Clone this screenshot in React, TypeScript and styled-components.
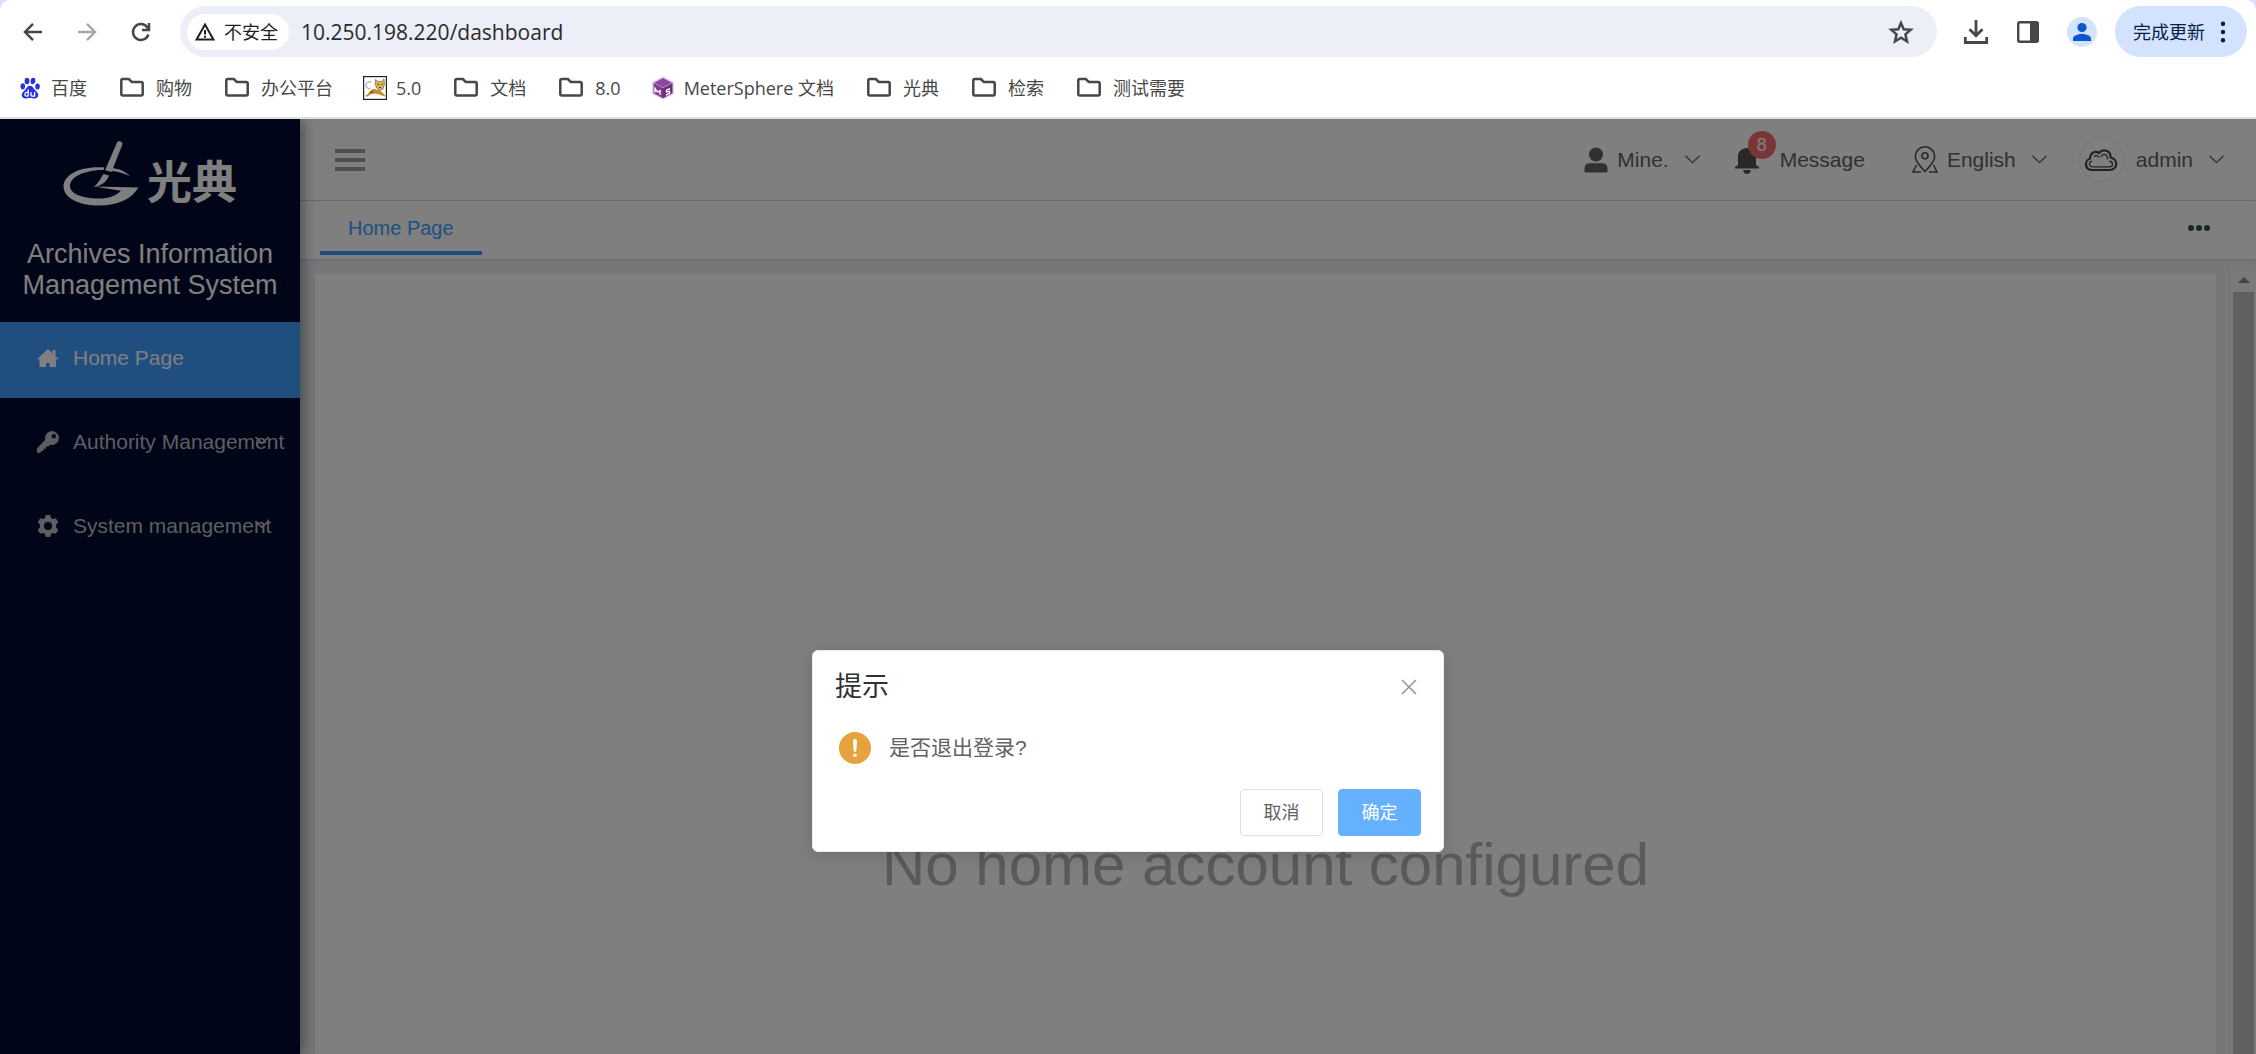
import React from "react";
import styled, { createGlobalStyle } from "styled-components";

const latin = '"Liberation Sans", Arial, "Noto Sans CJK SC", sans-serif';
const system = '"Open Sans", "Noto Sans CJK SC", sans-serif';

const GlobalStyle = createGlobalStyle`
  * { box-sizing: border-box; }
  html, body, #root { height: 100%; }
  body {
    margin: 0;
    overflow: hidden;
    font-family: ${latin};
    background: #d3e3fd;
  }
  button {
    border: 0;
    padding: 0;
    margin: 0;
    background: none;
    font: inherit;
    color: inherit;
    cursor: pointer;
  }
  a { color: inherit; text-decoration: none; }
  svg { display: block; flex: none; }
`;

const Window = styled.div`
  display: flex;
  flex-direction: column;
  height: 100vh;
`;

/* ---------- Browser chrome ---------- */

const Chrome = styled.header`
  flex: none;
  background: #fff;
  border-radius: 10px 10px 0 0;
  border-bottom: 2px solid #dedfe0;
  font-family: ${system};
  color: #474747;
`;

const Toolbar = styled.div`
  display: flex;
  align-items: center;
  padding: 6px 9px 0 20px;
`;

const NavButtons = styled.div`
  display: flex;
  gap: 28px;
  margin-right: 26px;
`;

const IconButton = styled.button<{ $faded?: boolean }>`
  display: flex;
  color: ${(p) => (p.$faded ? "#a9a9a9" : "#474747")};
`;

const Omnibox = styled.div`
  flex: 1;
  display: flex;
  align-items: center;
  height: 51px;
  padding: 0 23px 0 7px;
  border-radius: 26px;
  background: #eceef8;
`;

const SecurityChip = styled.button`
  display: flex;
  align-items: center;
  gap: 8px;
  height: 36px;
  padding: 0 11px 0 7px;
  border-radius: 18px;
  background: #fff;
  color: #1f1f1f;
  font-size: 18px;
  line-height: 24px;
`;

const Address = styled.input`
  flex: 1;
  min-width: 0;
  border: 0;
  outline: 0;
  padding: 0 0 0 12px;
  background: transparent;
  color: #2b2b2b;
  font-family: ${system};
  font-size: 21px;
  line-height: 28px;
`;

const Actions = styled.div`
  display: flex;
  align-items: center;
  gap: 25px;
  margin-left: 26px;
`;

const Avatar = styled.button`
  display: flex;
  align-items: center;
  justify-content: center;
  width: 30px;
  height: 30px;
  border-radius: 50%;
  background: #d3e3fd;
  color: #0b57d0;
`;

const UpdateButton = styled.button`
  display: flex;
  align-items: center;
  gap: 15px;
  height: 51px;
  margin-left: -7px;
  padding: 0 21px 0 18px;
  border-radius: 26px;
  background: #d3e3fd;
  color: #041e49;
  font-size: 18px;
  line-height: 24px;
`;

const Bookmarks = styled.nav`
  display: flex;
  align-items: center;
  gap: 30px;
  height: 60px;
  padding: 2px 0 0 18px;
`;

const Bookmark = styled.a<{ $folder?: boolean }>`
  display: flex;
  align-items: center;
  gap: ${(p) => (p.$folder ? 12 : 9)}px;
  padding-left: ${(p) => (p.$folder ? 3 : 0)}px;
  font-size: 18px;
  line-height: 24px;
  white-space: nowrap;
`;

/* ---------- Application ---------- */

const Page = styled.div`
  position: relative;
  flex: 1;
  min-height: 0;
  display: flex;
  overflow: hidden;
  background: #eaeef3;
`;

const Sidebar = styled.aside`
  position: relative;
  z-index: 1;
  flex: none;
  width: 300px;
  background: #000a30;
  box-shadow: 2px 0 14px rgba(0, 0, 0, 0.45);
`;

const Brand = styled.div`
  display: flex;
  justify-content: center;
  align-items: flex-end;
  height: 88px;
  gap: 8px;
  color: #fff;
`;

const BrandName = styled.span`
  padding-bottom: 2px;
  font-family: "Noto Sans CJK SC", sans-serif;
  font-size: 45px;
  font-weight: 700;
  line-height: 50px;
`;

const SystemTitle = styled.h1`
  margin: 32px 0 0;
  padding: 0 12px;
  height: 83px;
  color: #fff;
  font-size: 27px;
  font-weight: 400;
  line-height: 31px;
  text-align: center;
`;

const Menu = styled.nav`
  display: flex;
  flex-direction: column;
  gap: 8px;
`;

const MenuItem = styled.a<{ $active?: boolean }>`
  position: relative;
  display: flex;
  align-items: center;
  gap: 14px;
  height: 76px;
  padding: 0 0 4px 37px;
  background: ${(p) => (p.$active ? "#409eff" : "transparent")};
  color: ${(p) => (p.$active ? "#fff" : "#bdbdc2")};
  font-size: 21px;
  line-height: 28px;
  white-space: nowrap;
`;

const MenuArrow = styled.span`
  position: absolute;
  right: 31px;
  top: 30px;
`;

const Main = styled.div`
  flex: 1;
  min-width: 0;
  display: flex;
  flex-direction: column;
`;

const TopBar = styled.header`
  flex: none;
  display: flex;
  align-items: center;
  justify-content: space-between;
  height: 82px;
  padding: 0 32px 0 35px;
  background: #fff;
  border-bottom: 1px solid #dcdcdc;
`;

const Burger = styled.button`
  display: flex;
  flex-direction: column;
  gap: 5px;
  width: 30px;
`;

const BurgerLine = styled.span`
  height: 4px;
  background: #9c9c9c;
`;

const UserTools = styled.div`
  display: flex;
  align-items: center;
  gap: 32px;
  color: #606266;
  font-size: 21px;
  line-height: 28px;
`;

const Tool = styled.button<{ $gap?: number; $end?: number }>`
  display: flex;
  align-items: center;
  gap: ${(p) => p.$gap ?? 9}px;
  padding-right: ${(p) => p.$end ?? 0}px;
  white-space: nowrap;
`;

const ToolLabel = styled.span`
  display: flex;
  align-items: center;
  gap: 16px;
`;

const BellWrap = styled.span`
  position: relative;
  color: #505050;
`;

const Badge = styled.span`
  position: absolute;
  left: 16px;
  top: -15px;
  width: 28px;
  height: 28px;
  border-radius: 50%;
  background: #f56c6c;
  color: #fff;
  font-size: 18px;
  line-height: 28px;
  text-align: center;
`;

const CloudAvatar = styled.span`
  display: flex;
  align-items: center;
  justify-content: center;
  width: 45px;
  height: 45px;
  border: 1px solid #ebebeb;
  border-radius: 50%;
  color: #454545;
`;

const TabBar = styled.div`
  flex: none;
  display: flex;
  align-items: center;
  justify-content: space-between;
  height: 58px;
  padding: 0 46px 0 20px;
  background: #fff;
  box-shadow: 0 1px 4px rgba(0, 21, 41, 0.12);
`;

const Tab = styled.a`
  align-self: flex-start;
  height: 54px;
  padding: 11px 28px 0;
  border-bottom: 4px solid #409eff;
  color: #409eff;
  font-size: 20px;
  line-height: 32px;
`;

const More = styled.button`
  display: flex;
  gap: 2px;
  padding-bottom: 5px;
`;

const Dot = styled.span`
  width: 6px;
  height: 6px;
  border-radius: 50%;
  background: #304c50;
`;

const Workspace = styled.main`
  flex: 1;
  min-height: 0;
  display: flex;
  gap: 15px;
  padding-left: 15px;
`;

const Panel = styled.section`
  flex: 1;
  margin-top: 15px;
  padding-top: 556px;
  background: #fff;
`;

const Empty = styled.p`
  margin: 0;
  color: #b4b4b4;
  font-size: 60px;
  line-height: 70px;
  text-align: center;
`;

const ScrollTrack = styled.div`
  width: 25px;
  margin-top: 7px;
  padding: 11px 2px 0;
  display: flex;
  flex-direction: column;
  align-items: center;
  gap: 9px;
  background: #f4f4f4;
`;

const ScrollThumb = styled.div`
  flex: 1;
  width: 100%;
  background: #c1c1c1;
`;

/* ---------- Confirmation dialog ---------- */

const Overlay = styled.div`
  position: absolute;
  inset: 0;
  z-index: 2;
  display: flex;
  justify-content: center;
  align-items: flex-start;
  padding-top: 531px;
  background: rgba(0, 0, 0, 0.5);
`;

const Dialog = styled.section`
  width: 632px;
  padding: 21px 22px 15px;
  border: 1px solid #ebeef5;
  border-radius: 6px;
  background: #fff;
  box-shadow: 0 3px 18px rgba(0, 0, 0, 0.15);
`;

const DialogHeader = styled.div`
  display: flex;
  align-items: center;
  justify-content: space-between;
  padding-right: 4px;
`;

const DialogTitle = styled.h2`
  margin: 0;
  color: #303133;
  font-size: 27px;
  font-weight: 400;
  line-height: 30px;
`;

const CloseButton = styled.button`
  color: #909399;
`;

const DialogBody = styled.div`
  display: flex;
  align-items: center;
  gap: 18px;
  padding: 30px 4px 25px;
  color: #606266;
  font-size: 21px;
  line-height: 32px;
`;

const DialogFooter = styled.div`
  display: flex;
  justify-content: flex-end;
  gap: 15px;
`;

const DialogButton = styled.button<{ $primary?: boolean }>`
  width: 83px;
  height: 47px;
  border: 1px solid ${(p) => (p.$primary ? "#66b1ff" : "#dcdfe6")};
  border-radius: 4px;
  background: ${(p) => (p.$primary ? "#66b1ff" : "#fff")};
  color: ${(p) => (p.$primary ? "#fff" : "#606266")};
  font-size: 18px;
  line-height: 24px;
`;

/* ---------- Icons ---------- */

const Chevron = ({ size = 15, stroke = 1.3 }: { size?: number; stroke?: number }) => (
  <svg width={size} height="9" viewBox="0 0 15 9" fill="none" stroke="currentColor" strokeWidth={stroke}>
    <path d="M.5.8 7.5 7.6 14.5.8" />
  </svg>
);

const BackIcon = ({ flip = false }: { flip?: boolean }) => (
  <svg width="26" height="26" viewBox="0 0 26 26" fill="none" stroke="currentColor" strokeWidth="2.5">
    <path d={flip ? "M4 13h16.5M13 4.8l8 8.2-8 8.2" : "M22 13H5.5M13 4.8l-8 8.2 8 8.2"} />
  </svg>
);

const ReloadIcon = () => (
  <svg width="26" height="26" viewBox="0 0 26 26" fill="none" stroke="currentColor" strokeWidth="2.5">
    <path d="M20.4 15.5A7.9 7.9 0 1 1 19.2 8.2L20.5 10" />
    <path d="M21 4v7h-7" />
  </svg>
);

const WarnIcon = () => (
  <svg width="22" height="20" viewBox="0 0 22 20" fill="none" stroke="currentColor" strokeWidth="2">
    <path d="M11 2.500 2.600 17.500h16.800z" />
    <path d="M11 8v4.500M11 13.700v2" />
  </svg>
);

const StarIcon = () => (
  <svg width="26" height="26" viewBox="0 0 26 26" fill="none" stroke="currentColor" strokeWidth="2.500">
    <path d="m13 4 2.700 6.200 7 .6-5.300 4.600 1.600 6.900-6-3.700-6 3.700 1.600-6.900-5.300-4.600 7-.6z" />
  </svg>
);

const DownloadIcon = () => (
  <svg width="26" height="26" viewBox="0 0 26 26" fill="none" stroke="currentColor" strokeWidth="2.800">
    <path d="M13 1v15M6.500 10.300l6.500 6.400 6.500-6.400M2.300 18v5.500h21.400V18" />
  </svg>
);

const SidePanelIcon = () => (
  <svg width="28" height="26" viewBox="1 0 28 26">
    <rect x="5.200" y="3.200" width="19.600" height="19.600" rx="1.500" fill="none" stroke="currentColor" strokeWidth="2.400" />
    <path d="M17 3h8v20h-8z" fill="currentColor" />
  </svg>
);

const PersonIcon = ({ width, height }: { width: number; height: number }) => (
  <svg width={width} height={height} viewBox="0 0 24 26" fill="currentColor">
    <circle cx="12" cy="7.500" r="7" />
    <path d="M.5 25.500V21c0-3.200 2-4.800 5-4.800h13c3 0 5 1.600 5 4.800v4.500z" />
  </svg>
);

const UserBadgeIcon = () => (
  <svg width="18" height="18" viewBox="0 0 18 18" fill="currentColor">
    <circle cx="9" cy="4.600" r="4.600" />
    <path d="M0 18v-2.500C0 12.500 5 11 9 11s9 1.500 9 4.500V18z" />
  </svg>
);

const KebabIcon = () => (
  <svg width="6" height="22" viewBox="0 0 6 22" fill="currentColor">
    <circle cx="3" cy="2.800" r="2.200" />
    <circle cx="3" cy="11" r="2.200" />
    <circle cx="3" cy="19.200" r="2.200" />
  </svg>
);

const FolderIcon = () => (
  <svg width="24" height="24" viewBox="0 0 24 24" fill="none" stroke="currentColor" strokeWidth="2.500">
    <path d="M1.300 18V4.500q0-1.500 1.500-1.500h6l3 3h9.400q1.500 0 1.500 1.500V18q0 1.500-1.500 1.500H2.800q-1.500 0-1.500-1.500z" />
  </svg>
);

const BaiduIcon = () => (
  <svg width="24" height="24" viewBox="0 0 24 24">
    <g fill="#2932e1">
      <ellipse cx="4.800" cy="10.300" rx="2.300" ry="3.100" />
      <ellipse cx="9" cy="5" rx="2.400" ry="3.300" />
      <ellipse cx="15" cy="5" rx="2.400" ry="3.300" transform="rotate(8 15 5)" />
      <ellipse cx="19.500" cy="10.500" rx="2.300" ry="3.100" />
      <path d="M12 9.800c2.300 0 3.200 2.200 4.800 4 1.600 1.700 4 3.400 3.400 6-.5 2.500-2.800 2.900-4.700 2.600-2.300-.4-4.700-.4-7 0-1.900.3-4.200-.1-4.700-2.600-.6-2.600 1.800-4.300 3.400-6 1.600-1.800 2.500-4 4.800-4z" />
    </g>
    <g fill="none" stroke="#fff" strokeWidth="1.300">
      <path d="M10.200 13.500v6.700M10.200 16.300H8.500c-2.200.2-2.200 3.600 0 3.800h1.700M13 16v3c0 .8.300 1.100 1 1.100h2.600V16" />
    </g>
  </svg>
);

const TomcatIcon = () => (
  <svg width="24" height="24" viewBox="0 0 24 24">
    <rect x=".6" y=".6" width="22.800" height="22.800" fill="#fff" stroke="#222" strokeWidth="1.200" />
    <path d="M8 6C4 5 2 8 3.500 11c1 2 3 2 4 1" fill="none" stroke="#888" />
    <path d="M1.500 20c3-.5 4-3 6-5.500 1.500-1.800 4-2 6-1l4 1.500 4.500 4-.5 1.500-5-2-4-1-4.500.5-3.500 2.500z" fill="#c8892b" />
    <path d="M12.500 3.500 15 5.500h3.500L21 3l.5 5.500-1.500 4.500-3 1.500-3.500-2.500-1.300-4z" fill="#d9b35e" stroke="#6b5328" strokeWidth=".6" />
    <path d="m14.500 8 1.500 1M20 7.500 18.500 9M16 11.500h2M7 17l3-1.500" stroke="#3c3226" strokeWidth=".9" />
  </svg>
);

const MeterSphereIcon = () => (
  <svg width="24" height="24" viewBox="0 0 24 24">
    <path d="m12 .3 11 5.800v11.800L12 23.700 1 17.900V6.100z" fill="#e2d3e8" />
    <path d="m12 2 9 4.700-9 4.700-9-4.700z" fill="#8b479b" />
    <path d="m2.500 7 9.500 4.900V22.300l-9.500-5z" fill="#7f3c90" />
    <path d="M21.500 7 12 11.900V22.300l9.500-5z" fill="#6a2d7a" />
    <path d="M4 16.500v-4l2.300 3.300L9 14.800v4M19 12.500l-3.500 1.700v1.800l3-.6v2l-3.700 1.800" fill="none" stroke="#fff" strokeWidth="1.400" />
  </svg>
);

const LogoMark = () => (
  <svg width="76" height="66" viewBox="0 0 76 66">
    <path
      fill="currentColor"
      fillRule="evenodd"
      d="M41.500 26.500C17 24.500.5 34 .5 45.500.5 57 16 64.500 36 64.500c19.500 0 32.500-6.500 39.500-18L31 45.500l27 4.200c-5 5-12.500 7.800-22 7.800C18.500 57.500 7 52.500 7 45c0-9 14-16 33.500-16zM49 27c8 .8 14 4 18.500 8.500C61 32 55 30.500 48 30z"
    />
    <path fill="currentColor" d="M54 1.500c1.200-2.400 6-1.400 5.400 2L48.500 31l-6.500-1.800z" />
    <path fill="currentColor" d="m40.500 33 5.500 1.500c-2 6-8 10.500-15.500 11.500 5-3.500 6.500-8 10-13z" />
  </svg>
);

const HomeIcon = () => (
  <svg width="22" height="22" viewBox="0 0 22 22" fill="currentColor">
    <path d="M11 2 0 12.300h2.500V20H9v-4h3.500v4H19v-7.700h3L18.500 9V3h-3v3.200z" />
  </svg>
);

const KeyIcon = () => (
  <svg width="22" height="22" viewBox="0 0 22 22" fill="currentColor">
    <path
      fillRule="evenodd"
      d="M15 0a7 7 0 1 1-1.800 13.800L11.500 15.500H9v2.300H6.500V20H4v1.500L0 22v-4.500l8.300-8.700A7 7 0 0 1 15 0zm1.800 3a2.200 2.200 0 1 0 0 4.400 2.200 2.200 0 0 0 0-4.400z"
    />
  </svg>
);

const GearIcon = () => (
  <svg width="22" height="22" viewBox="0 0 22 22" fill="currentColor">
    <path
      fillRule="evenodd"
      d="M8.700 0h4.600l.7 2.900 2 1.200 2.900-.9 2.300 4L19.100 9.500v3l2.100 2.300-2.300 4-2.900-.9-2 1.200-.7 2.900H8.700L8 19.100l-2-1.200-2.900.9-2.300-4 2.100-2.300v-3L.8 7.200l2.300-4 2.900.9 2-1.200zM11 7a4 4 0 1 0 0 8 4 4 0 0 0 0-8z"
    />
  </svg>
);

const BellIcon = () => (
  <svg width="28" height="28" viewBox="0 0 28 28" fill="currentColor">
    <path d="M15 2c5 0 9 3.500 9 8.500V19l3 2v1.500H3V21l3-2v-8.500C6 5.500 10 2 15 2zM11 24h8c-.5 2.500-2 4-4 4s-3.500-1.500-4-4z" />
  </svg>
);

const LocationIcon = () => (
  <svg width="26" height="27" viewBox="0 0 26 27" fill="none" stroke="#505050" strokeWidth="1.600">
    <path d="M13 25.500C8.500 20.500 3.300 16 3.300 10.500a9.700 9.700 0 0 1 19.400 0C22.700 16 17.500 20.500 13 25.500z" />
    <circle cx="13" cy="9.700" r="3" />
    <path d="M4.500 19 1 26h8M21.500 19l3.500 7h-8" />
  </svg>
);

const CloudIcon = () => (
  <svg width="34" height="24" viewBox="0 0 34 24" fill="none" stroke="currentColor" strokeLinejoin="round">
    <path d="M8.500 22C0 22 .5 12 6 10.800 6 5 11 2 15 5c3.500-4.500 12-3 11.500 4.500C34.500 11 34 22 25.500 22z" strokeWidth="2.200" />
    <path d="M9.500 18.800C4 18.800 4.500 14 8 13M10 8.500c1.500-1.500 4-1 5 1M17 9c2-4.500 7-2.500 6.500 2.500M25.500 13c4 1 4 5.800 0 5.800h-16" strokeWidth="1.300" />
  </svg>
);

const CloseIcon = () => (
  <svg width="16" height="16" viewBox="0 0 16 16" stroke="currentColor" strokeWidth="1.500">
    <path d="m1 1 14 14M15 1 1 15" />
  </svg>
);

const AlertIcon = () => (
  <svg width="32" height="32" viewBox="0 0 32 32">
    <circle cx="16" cy="16" r="16" fill="#e6a23c" />
    <path d="M14 9a2 2 0 0 1 4 0l-.6 9.500a1.400 1.400 0 0 1-2.800 0z" fill="#fff" />
    <circle cx="16" cy="23.200" r="1.800" fill="#fff" />
  </svg>
);

const ScrollArrow = () => (
  <svg width="12" height="6" viewBox="0 0 12 6" fill="#8a8a8a">
    <path d="m6 0 6 6H0z" />
  </svg>
);

/* ---------- Data ---------- */

const bookmarks: { label: string; icon?: React.ReactNode }[] = [
  { label: "百度", icon: <BaiduIcon /> },
  { label: "购物" },
  { label: "办公平台" },
  { label: "5.0", icon: <TomcatIcon /> },
  { label: "文档" },
  { label: "8.0" },
  { label: "MeterSphere 文档", icon: <MeterSphereIcon /> },
  { label: "光典" },
  { label: "检索" },
  { label: "测试需要" },
];

const menu = [
  { label: "Home Page", icon: <HomeIcon />, active: true },
  { label: "Authority Management", icon: <KeyIcon />, nested: true },
  { label: "System management", icon: <GearIcon />, nested: true },
];

export default function App() {
  return (
    <>
      <GlobalStyle />
      <Window>
        <Chrome>
          <Toolbar>
            <NavButtons>
              <IconButton aria-label="后退"><BackIcon /></IconButton>
              <IconButton aria-label="前进" $faded><BackIcon flip /></IconButton>
              <IconButton aria-label="重新加载"><ReloadIcon /></IconButton>
            </NavButtons>
            <Omnibox>
              <SecurityChip><WarnIcon />不安全</SecurityChip>
              <Address aria-label="地址" defaultValue="10.250.198.220/dashboard" />
              <IconButton aria-label="收藏"><StarIcon /></IconButton>
            </Omnibox>
            <Actions>
              <IconButton aria-label="下载"><DownloadIcon /></IconButton>
              <IconButton aria-label="侧边栏"><SidePanelIcon /></IconButton>
              <Avatar aria-label="用户"><UserBadgeIcon /></Avatar>
              <UpdateButton>完成更新<KebabIcon /></UpdateButton>
            </Actions>
          </Toolbar>
          <Bookmarks>
            {bookmarks.map((b) => (
              <Bookmark key={b.label} href="#" $folder={!b.icon}>
                {b.icon ?? <FolderIcon />}
                {b.label}
              </Bookmark>
            ))}
          </Bookmarks>
        </Chrome>

        <Page>
          <Sidebar>
            <Brand>
              <LogoMark />
              <BrandName>光典</BrandName>
            </Brand>
            <SystemTitle>Archives Information Management System</SystemTitle>
            <Menu>
              {menu.map((m) => (
                <MenuItem key={m.label} href="#" $active={m.active}>
                  {m.icon}
                  {m.label}
                  {m.nested && <MenuArrow><Chevron size={14} stroke={1.7} /></MenuArrow>}
                </MenuItem>
              ))}
            </Menu>
          </Sidebar>

          <Main>
            <TopBar>
              <Burger aria-label="Toggle menu">
                <BurgerLine />
                <BurgerLine />
                <BurgerLine />
              </Burger>
              <UserTools>
                <Tool>
                  <PersonIcon width={24} height={26} />
                  <ToolLabel>Mine.<Chevron /></ToolLabel>
                </Tool>
                <Tool $gap={20} $end={15}>
                  <BellWrap><BellIcon /><Badge>8</Badge></BellWrap>
                  Message
                </Tool>
                <Tool>
                  <LocationIcon />
                  <ToolLabel>English<Chevron /></ToolLabel>
                </Tool>
                <Tool $gap={12}>
                  <CloudAvatar><CloudIcon /></CloudAvatar>
                  <ToolLabel>admin<Chevron /></ToolLabel>
                </Tool>
              </UserTools>
            </TopBar>
            <TabBar>
              <Tab href="#">Home Page</Tab>
              <More aria-label="More"><Dot /><Dot /><Dot /></More>
            </TabBar>
            <Workspace>
              <Panel>
                <Empty>No home account configured</Empty>
              </Panel>
              <ScrollTrack>
                <ScrollArrow />
                <ScrollThumb />
              </ScrollTrack>
            </Workspace>
          </Main>

          <Overlay>
            <Dialog role="dialog" aria-modal="true" aria-labelledby="confirm-title">
              <DialogHeader>
                <DialogTitle id="confirm-title">提示</DialogTitle>
                <CloseButton aria-label="关闭"><CloseIcon /></CloseButton>
              </DialogHeader>
              <DialogBody><AlertIcon />是否退出登录?</DialogBody>
              <DialogFooter>
                <DialogButton>取消</DialogButton>
                <DialogButton $primary>确定</DialogButton>
              </DialogFooter>
            </Dialog>
          </Overlay>
        </Page>
      </Window>
    </>
  );
}
